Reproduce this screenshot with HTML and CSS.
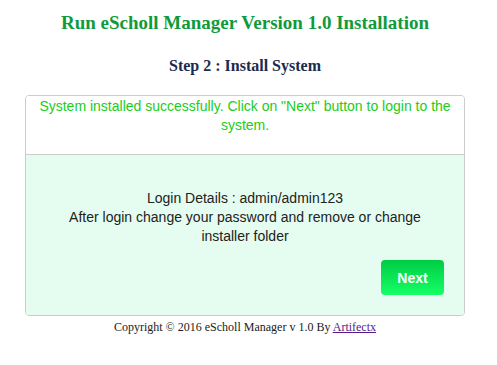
FILE: index.html
```html
<!DOCTYPE html>
<html lang="en">
<head>
    <meta charset="UTF-8">
    <meta name="viewport" content="width=device-width, initial-scale=1.0">
    <title>eScholl Installation</title>
    <link rel="stylesheet" href="styles.css">
</head>
<body>
    <div class="wrap">
        <h1 class="title">Run eScholl Manager Version 1.0 Installation</h1>
        <h2 class="step">Step 2 : Install System</h2>

        <div class="panel">
            <div class="panel-head">
                System installed successfully. Click on "Next" button to login to the system.
            </div>
            <div class="panel-body">
                <p class="details">
                    Login Details : admin/admin123<br>
                    After login change your password and remove or change installer folder
                </p>
                <div class="actions">
                    <button type="button" class="next">Next</button>
                </div>
            </div>
        </div>

        <p class="footer">Copyright &copy; 2016 eScholl Manager v 1.0 By <a href="#">Artifectx</a></p>
    </div>
</body>
</html>
```

FILE: styles.css
```css
* {
    box-sizing: border-box;
    margin: 0;
    padding: 0;
}

body {
    background-color: #fff;
    font-family: "Liberation Serif", "Times New Roman", serif;
}

.wrap {
    width: 440px;
    margin-left: 25px;
}

.title {
    margin-top: 12px;
    text-align: center;
    font-size: 19px;
    line-height: 22px;
    font-weight: bold;
    color: #119a3b;
}

.step {
    margin-top: 22px;
    text-align: center;
    font-size: 16px;
    line-height: 20px;
    font-weight: bold;
    color: #1b2b4f;
}

.panel {
    margin-top: 19px;
    border: 1px solid #ccc;
    border-radius: 4px;
    overflow: hidden;
}

.panel-head {
    padding: 1px 10px 17px;
    height: 59px;
    text-align: center;
    font-family: "Liberation Sans", Arial, sans-serif;
    font-size: 14px;
    line-height: 19px;
    color: #22cc22;
    background-color: #fff;
    border-bottom: 1px solid #ccc;
}

.panel-body {
    background-color: #e5fdf0;
    padding: 34px 20px 20px;
}

.details {
    text-align: center;
    font-family: "Liberation Sans", Arial, sans-serif;
    font-size: 14px;
    line-height: 19px;
    color: #222;
}

.actions {
    display: flex;
    justify-content: flex-end;
    margin-top: 14px;
}

.next {
    width: 63px;
    height: 35px;
    border: none;
    border-radius: 4px;
    background: linear-gradient(#00cc44, #15ff66);
    color: #fff;
    font-family: "Liberation Sans", Arial, sans-serif;
    font-size: 14px;
    font-weight: bold;
    cursor: pointer;
}

.footer {
    margin-top: 4px;
    text-align: center;
    font-size: 12px;
    line-height: 14px;
    color: #222;
}

.footer a {
    color: #551a8b;
}
```
